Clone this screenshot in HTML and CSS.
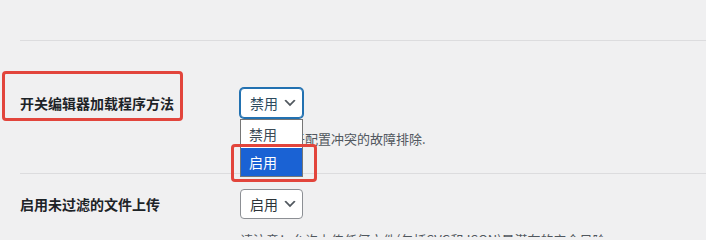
FILE: index.html
```html
<!DOCTYPE html>
<html lang="zh-CN">
<head>
<meta charset="utf-8">
<title>设置</title>
<link rel="stylesheet" href="styles.css">
</head>
<body>
<div class="wrap">
  <div class="section-top"></div>
  <div class="row row-first">
    <div class="label">开关编辑器加载程序方法</div>
    <div class="field">
      <div class="select-wrap">
        <div class="select is-focus">
          <span class="select-text">禁用</span>
          <svg class="chev" width="16" height="16" viewBox="0 0 20 20"><path d="M5 6l5 5 5-5 2 1-7 7-7-7 2-1z" fill="#50575e"/></svg>
        </div>
        <ul class="dropdown">
          <li class="opt">禁用</li>
          <li class="opt opt-active">启用</li>
        </ul>
      </div>
      <p class="description">此选项用于配置冲突的故障排除.</p>
    </div>
  </div>
  <div class="row">
    <div class="label">启用未过滤的文件上传</div>
    <div class="field">
      <div class="select-wrap">
        <div class="select">
          <span class="select-text">启用</span>
          <svg class="chev" width="16" height="16" viewBox="0 0 20 20"><path d="M5 6l5 5 5-5 2 1-7 7-7-7 2-1z" fill="#50575e"/></svg>
        </div>
      </div>
      <p class="description">请注意！允许上传任何文件(包括SVG和JSON)是潜在的安全风险。</p>
    </div>
  </div>
</div>
<div class="mark mark-label"></div>
<div class="mark mark-option"></div>
</body>
</html>
```

FILE: styles.css
```css
html, body {
  margin: 0;
  padding: 0;
}
body {
  background: #f0f0f1;
  font-family: "Noto Sans CJK SC", "Noto Sans", sans-serif;
  color: #1d2327;
  width: 706px;
  height: 237px;
  overflow: hidden;
  position: relative;
}
.wrap {
  padding-left: 20px;
  padding-top: 40px;
}
.section-top {
  border-top: 1px solid #dcdcde;
}
.row {
  display: grid;
  grid-template-columns: 220px 1fr;
  padding: 15px 0 24px;
  border-bottom: 1px solid #dcdcde;
}
.row-first {
  padding-top: 47px;
}
.label {
  font-size: 14px;
  font-weight: 700;
  line-height: 30px;
  color: #1d2327;
}
.field {
  display: flex;
  flex-direction: column;
  align-items: flex-start;
}
.select-wrap {
  position: relative;
}
.select {
  display: flex;
  align-items: center;
  box-sizing: border-box;
  height: 30px;
  width: 63px;
  padding: 0 5px 0 9px;
  gap: 4px;
  background: #fff;
  border: 1px solid #8c8f94;
  border-radius: 4px;
  font-size: 14px;
  color: #2c3338;
}
.select.is-focus {
  border-color: #2271b1;
  box-shadow: 0 0 0 1px #2271b1;
  color: #2c4a5e;
}
.select-text {
  line-height: 28px;
  white-space: nowrap;
}
.chev {
  flex: none;
}
.dropdown {
  position: absolute;
  left: 0;
  top: 31px;
  width: 63px;
  box-sizing: border-box;
  margin: 0;
  padding: 0;
  list-style: none;
  background: #fff;
  border: 1px solid #767676;
  z-index: 2;
}
.opt {
  height: 28px;
  line-height: 28px;
  padding-left: 8px;
  font-size: 14px;
  color: #3c4a56;
}
.opt-active {
  background: #1a62d4;
  color: #fff;
}
.description {
  margin: 11px 0 0;
  font-size: 13px;
  line-height: 20px;
  color: #50575e;
  white-space: nowrap;
}
.mark {
  position: absolute;
  border: 3px solid #e2453c;
  border-radius: 4px;
  box-sizing: border-box;
  z-index: 3;
}
.mark-label {
  left: 2px;
  top: 71px;
  width: 181px;
  height: 50px;
}
.mark-option {
  left: 231px;
  top: 144px;
  width: 86px;
  height: 38px;
}
```
